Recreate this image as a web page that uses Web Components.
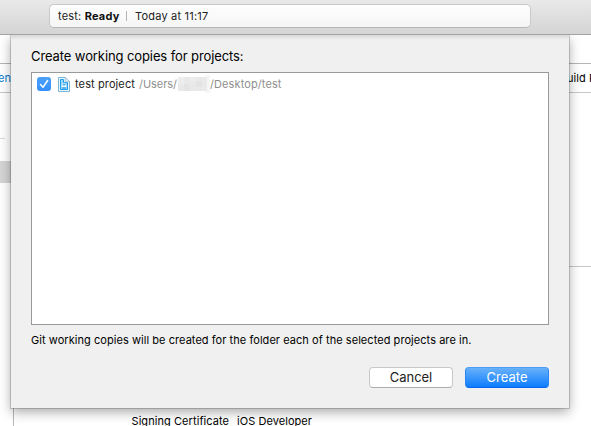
<!DOCTYPE html>
<html lang="en">
<head>
<meta charset="utf-8">
<title>Create working copies</title>
<style>
html,body{margin:0;width:591px;height:426px;overflow:hidden;background:#fff}
body{font-family:Inter,"Liberation Sans",sans-serif;color:#000}
</style>
</head>
<body>
<app-window></app-window>
<script>
function define(name, html, init) {
  customElements.define(name, class extends HTMLElement {
    constructor() {
      super();
      this.attachShadow({mode: 'open'}).innerHTML = html;
    }
    connectedCallback() { if (init) init(this); }
  });
}

/* A line of text whose tracking is adjusted to the advance given in "w". */
define('ui-text', `<style>
:host{display:inline-block;white-space:pre;flex:none;font-size:11px;line-height:14px}
span{display:inline-block}
</style><span><slot></slot></span>`, el => {
  const w = +el.getAttribute('w');
  const span = el.shadowRoot.querySelector('span');
  span.style.letterSpacing = '0px';
  if (w) {
    const natural = span.getBoundingClientRect().width;
    span.style.letterSpacing = (w - natural) / el.textContent.length + 'px';
  }
});

define('status-toolbar', `<style>
:host{display:block;box-sizing:border-box;height:35px;padding:4px 60px 0 49px;background:linear-gradient(#e9e9e9,#d4d4d4);border-bottom:1px solid #a3a3a3}
.field{box-sizing:border-box;height:24px;border:1px solid #c9c9c9;border-bottom-color:#b5b5b5;border-radius:5px;background:linear-gradient(#fefefe,#f5f5f5);display:flex;align-items:center;padding-left:8px;color:#222}
b{font-weight:700;color:#111}
i{width:1px;height:10px;background:#b4b4b4;margin:0 8px 0 6.5px}
</style><div class="field"><ui-text w="61.5">test: <b>Ready</b></ui-text><i></i><ui-text w="73.5">Today at 11:17</ui-text></div>`);

define('project-editor', `<style>
:host{display:grid;grid-template-rows:28px 1px 28px 1px 1fr;height:391px;background:#fff}
.rule{background:#b5b5b5}.rule.light{background:#c8c8c8}
.tabs{display:flex;justify-content:space-between;align-items:center;overflow:hidden}
.left{color:#087bd0;margin-left:-2px}
.right{width:24px}
.body{display:grid;grid-template-columns:13px 1fr}
.nav{display:grid;grid-template-rows:45px 1px 22px 22px 225px 1fr}
.nav hr{margin:0;border:0;background:#d9d9d9;width:5px}
.sel{background:#d5d5d5}
.nav .edge{grid-row:6;box-shadow:1px 0 #b8b8b8}
.main{display:grid;grid-template-rows:173px 1px 1fr}
.settings{display:flex;padding:149px 0 0 118.5px;gap:8px}
.settings ui-text{line-height:10px}
</style>
<div></div><div class="rule"></div>
<div class="tabs"><ui-text class="left">en</ui-text><ui-text class="right" w="60">uild Phases</ui-text></div>
<div class="rule light"></div>
<div class="body">
<div class="nav"><hr style="grid-row:2"><div class="sel" style="grid-row:4"></div><div class="edge"></div></div>
<div class="main"><div></div><div class="rule light"></div>
<div class="settings"><ui-text w="97.5">Signing Certificate</ui-text><ui-text w="75">iOS Developer</ui-text></div></div>
</div>`);

define('check-box', `<style>:host{display:block;width:14px;height:14px;flex:none}svg{display:block}</style>
<svg width="14" height="14" viewBox="0 0 14 14"><defs><linearGradient id="g" x2="0" y2="1"><stop stop-color="#4ba0fb"/><stop offset="1" stop-color="#3590fa"/></linearGradient></defs><rect width="14" height="14" rx="3" fill="url(#g)"/><path d="M3.5 7.6 6 10.3 10.6 3.5" fill="none" stroke="#fff" stroke-width="1.5" stroke-linecap="round" stroke-linejoin="round"/></svg>`);

define('project-icon', `<style>:host{display:block;width:12px;height:15px;flex:none}svg{display:block}</style>
<svg width="12" height="15" viewBox="0 0 12 15"><path d="M.5.5H7.3L11.5 4.7v9.8H.5Z" fill="#e6f6fe" stroke="#7cb4d6"/><path d="M7.3.5v4.2h4.2Z" fill="#eef5f8" stroke="#94b4c4" stroke-width=".7"/><path d="M2.5 2.5h3v3.2h4v6.8h-7Z" fill="#9bd9fb" stroke="#1e9cef"/><path d="m4 10 2-3.7L8 10M3.8 9.3h4.4" fill="none" stroke="#fff" stroke-width=".9"/><path d="M4 11h4.2M5 7.6h2" stroke="#178de4" stroke-width=".9"/></svg>`);

define('project-row', `<style>
:host{display:flex;align-items:center;height:16px;padding:3px 0 0 5px}
project-icon{margin:0 5px 0 7px}
.path{color:#8f8f8f}
.name{margin-right:4px;color:#222}
svg{display:block;flex:none}
</style><check-box></check-box><project-icon></project-icon><ui-text class="name" w="60">test project</ui-text><ui-text class="path" w="38">/Users/</ui-text>
<svg width="33" height="20" viewBox="0 0 33 20"><path fill="#e9e9e9" d="M1 3h30v14H1z"/><path fill="#ededed" d="M1 3h6v7H1zM13 3h6v4h-6z"/><path fill="#e4e4e4" d="M7 10h6v7H7zM19 7h6v6h-6z"/><path fill="#f6f6f6" d="M29 1h4v18h-4z"/><path fill="#eaeaea" d="M25 3h5v14h-5z"/></svg><ui-text class="path" w="71.5">/Desktop/test</ui-text>`);

define('push-button', `<style>
:host{display:flex;box-sizing:border-box;width:84px;height:21px;justify-content:center;align-items:center;border-radius:4px;background:#fff;border:1px solid #c8c8c8;border-bottom-color:#adadad;color:#222}
:host([primary]){border-color:#4a9df2 #2a85f5 #0866ee;background:linear-gradient(#69b1fa,#0d7dff);color:#fff}
::slotted(ui-text){font-size:13px;line-height:17px}
</style><slot></slot>`);

define('modal-sheet', `<style>
:host{position:absolute;left:11px;top:35px;box-sizing:border-box;width:558px;height:373px;padding:13px 20px 0;background:#f0f0f0;box-shadow:0 0 0 1px rgba(0,0,0,.17),0 4px 11px rgba(0,0,0,.34)}
:host::before{content:"";position:absolute;left:0;right:0;top:0;height:5px;background:linear-gradient(rgba(0,0,0,.10),transparent)}
.title{display:block;font-size:13px;line-height:17px}
.list{box-sizing:border-box;height:253px;margin-top:7px;border:1px solid #999;background:#fff}
.note{display:block;margin-top:8px}
.actions{display:flex;justify-content:flex-end;gap:12px;margin-top:20px}
</style>
<ui-text class="title" w="212.5">Create working copies for projects:</ui-text>
<div class="list"><project-row></project-row></div>
<ui-text class="note" w="440.5">Git working copies will be created for the folder each of the selected projects are in.</ui-text>
<div class="actions"><push-button><ui-text w="42.5">Cancel</ui-text></push-button><push-button primary><ui-text w="41">Create</ui-text></push-button></div>`);

define('app-window', `<style>
:host{display:block;position:relative;width:591px;height:426px;overflow:hidden}
.clip{position:absolute;inset:35px 0 0 0;overflow:hidden}
modal-sheet{top:0}
</style><status-toolbar></status-toolbar><project-editor></project-editor><div class="clip"><modal-sheet></modal-sheet></div>`);
</script>
</body>
</html>
